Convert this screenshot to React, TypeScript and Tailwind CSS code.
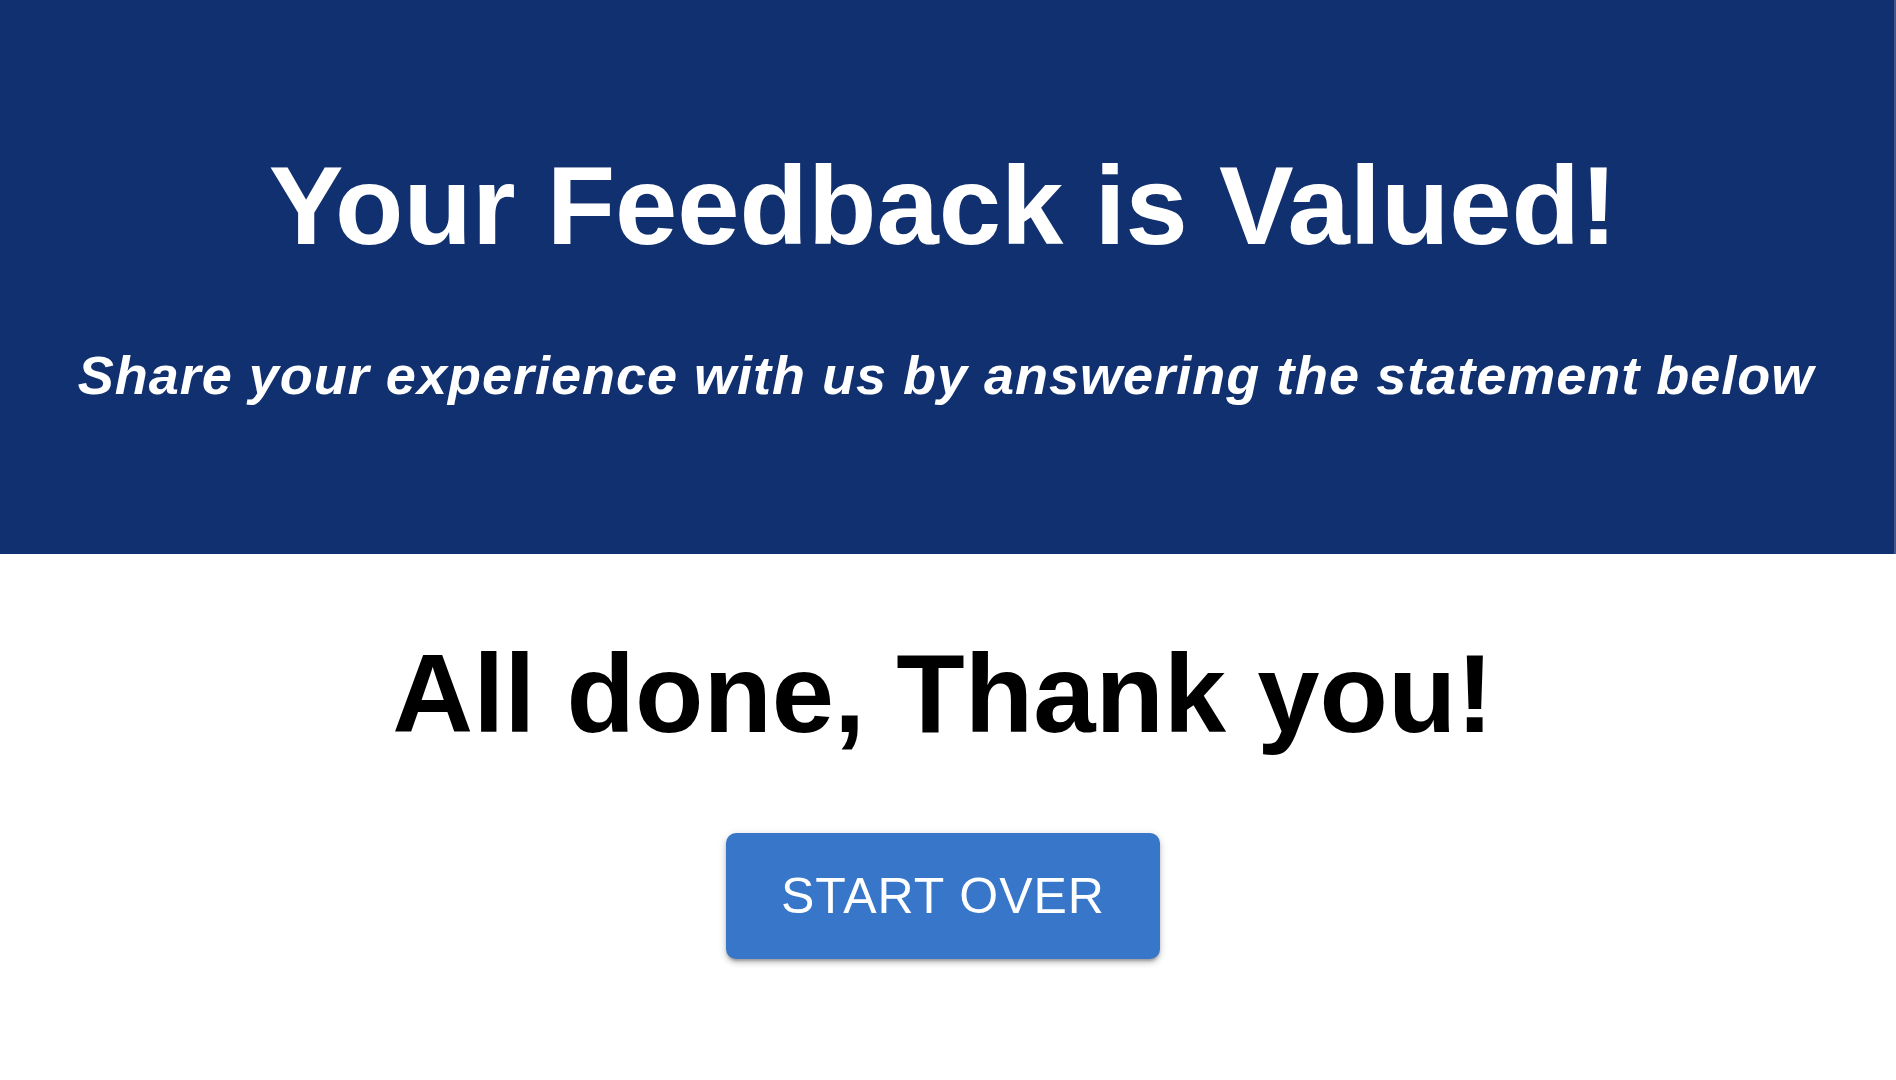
export default function App() {
  return (
    <div className="min-h-screen w-full bg-white" style={{ fontFamily: '"Liberation Sans", Arial, Helvetica, sans-serif' }}>
      {/* Header */}
      <header className="flex h-[554px] flex-col items-center border-r-2 border-[#41598a] bg-[#11306f] pr-[8px] pt-[150px] text-white">
        <h1 className="text-[112px] font-bold leading-[112px]">Your Feedback is Valued!</h1>
        <p className="mt-[86px] pl-[6px] text-[54px] font-bold italic leading-[54px] tracking-[1px]">
          Share your experience with us by answering the statement below
        </p>
      </header>

      {/* Done */}
      <main className="flex flex-col items-center pr-[10px] pt-[84px]">
        <h2 className="text-[112px] font-bold leading-[112px] text-black">All done, Thank you!</h2>
        <button className="mt-[83px] flex h-[126px] w-[434px] items-center justify-center rounded-[10px] bg-[#3776c9] text-[50px] uppercase leading-none tracking-[1px] text-white shadow-[0_3px_3px_-1px_rgba(0,0,0,0.25),0_4px_6px_0_rgba(0,0,0,0.16),0_1px_10px_0_rgba(0,0,0,0.1)]">
          Start Over
        </button>
      </main>
    </div>
  )
}
